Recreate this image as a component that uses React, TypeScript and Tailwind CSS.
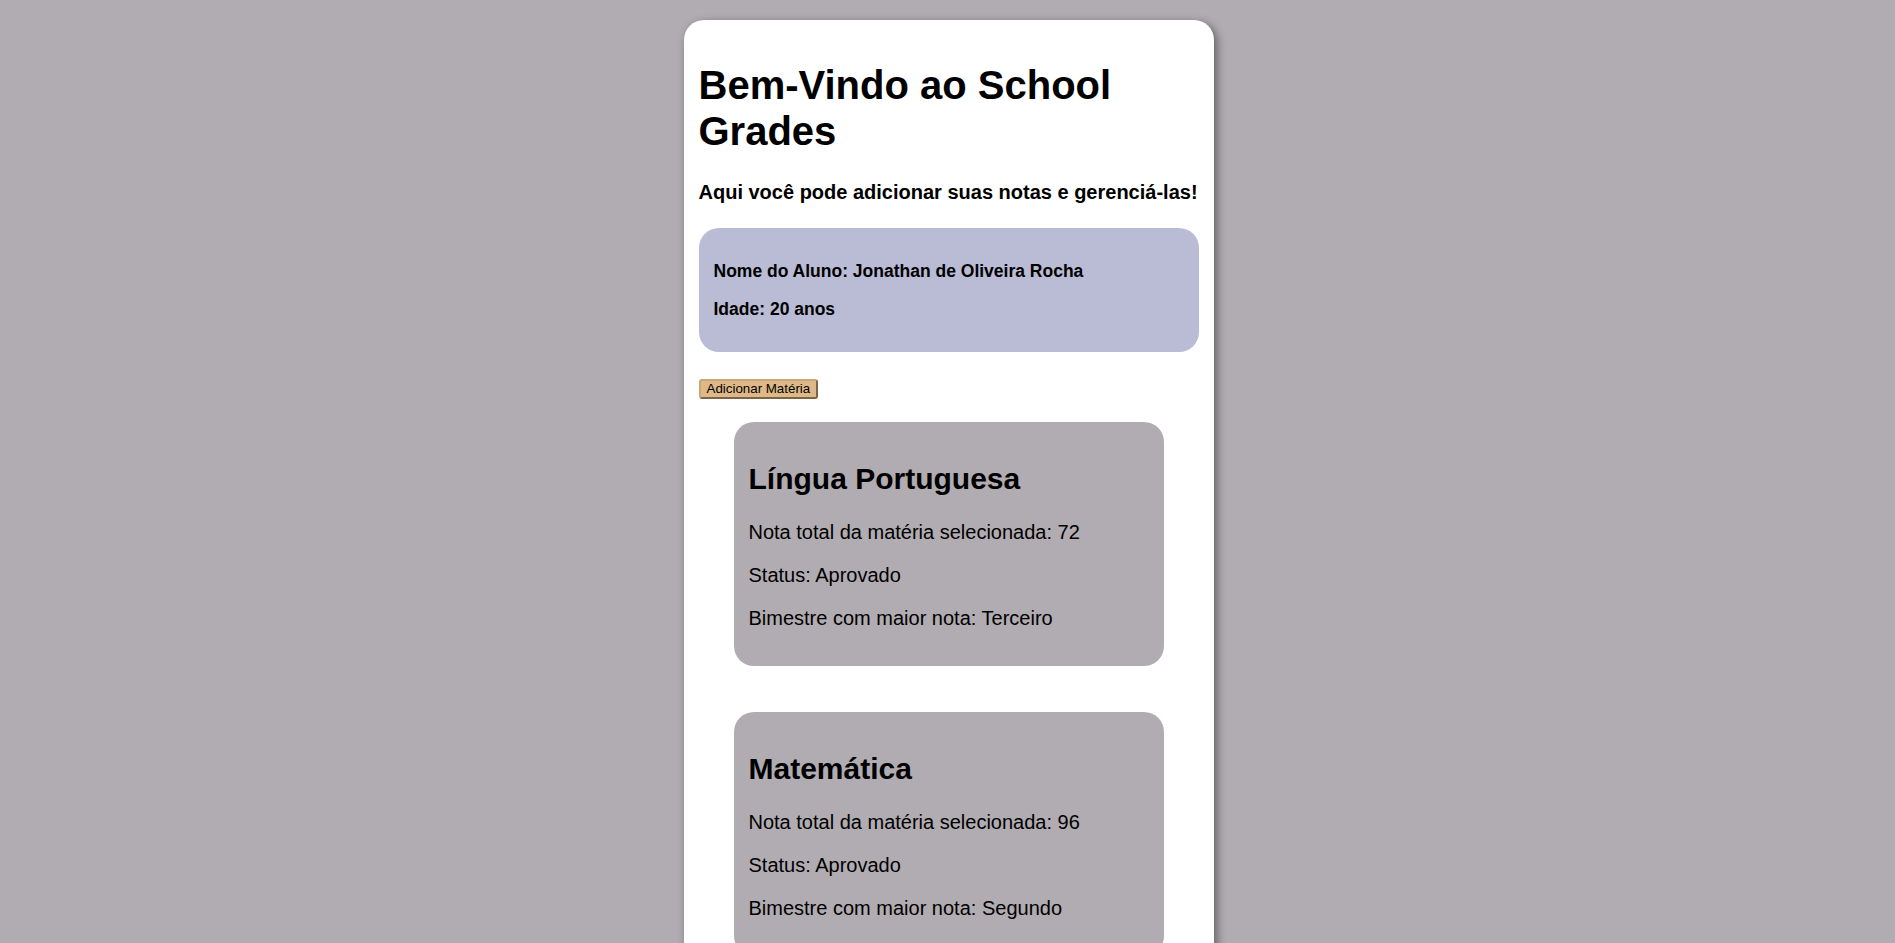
const STUDENT = {
  name: "Jonathan de Oliveira Rocha",
  age: 20,
};

const SUBJECTS = [
  { title: "Língua Portuguesa", total: 72, status: "Aprovado", best: "Terceiro" },
  { title: "Matemática", total: 96, status: "Aprovado", best: "Segundo" },
];

const SubjectCard = ({
  title,
  total,
  status,
  best,
}: (typeof SUBJECTS)[number]) => (
  <div className="w-[430px] rounded-[20px] bg-[#b0acb1] p-[15px] text-[20px] leading-[23px]">
    <h2 className="mt-[24px] mb-[25px] text-[30px] font-bold leading-[35px]">{title}</h2>
    <p className="mb-[20px]">Nota total da matéria selecionada: {total}</p>
    <p className="mb-[20px]">Status: {status}</p>
    <p className="mb-[21px]">Bimestre com maior nota: {best}</p>
  </div>
);

export default function App() {
  return (
    <div className="min-h-screen bg-[#b0acb1] pt-[20px] pl-[2px] font-['Liberation_Sans',Arial,sans-serif] text-black">
      <main className="mx-auto w-[530px] rounded-[20px] bg-white px-[15px] pt-[15px] pb-[40px] shadow-[3px_3px_10px_rgba(0,0,0,0.45)]">
        <h1 className="mt-[27px] text-[40px] font-bold leading-[46px]">Bem-Vindo ao School Grades</h1>
        <h3 className="mt-[27px] text-[20px] font-bold leading-[23px]">
          Aqui você pode adicionar suas notas e gerenciá-las!
        </h3>

        <section className="mt-[24px] flex flex-col gap-[18px] rounded-[20px] bg-[#babbd4] px-[15px] py-[33px] text-[17.5px] font-bold leading-[20px]">
          <h4>Nome do Aluno: {STUDENT.name}</h4>
          <h4>Idade: {STUDENT.age} anos</h4>
        </section>

        <button
          type="button"
          className="mt-[27px] rounded-[3px] border-2 border-t-[#c9a878] border-l-[#c9a878] border-r-[#7d6446] border-b-[#7d6446] bg-[#deb887] px-[6px] py-[1px] text-[13.33px] leading-[14px]"
        >
          Adicionar Matéria
        </button>

        <div className="mt-[22px] flex flex-col items-center gap-[46px]">
          {SUBJECTS.map((subject) => (
            <SubjectCard key={subject.title} {...subject} />
          ))}
        </div>
      </main>
    </div>
  );
}
